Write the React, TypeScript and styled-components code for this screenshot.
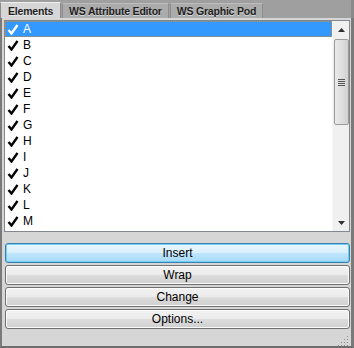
import React from "react";
import styled, { createGlobalStyle } from "styled-components";

const Global = createGlobalStyle`
    html, body {
        margin: 0;
        padding: 0;
        background: #a0a0a0;
    }
    * {
        box-sizing: border-box;
    }
`;

const Window = styled.div`
    width: 354px;
    height: 348px;
    display: flex;
    flex-direction: column;
    background: #a0a0a0;
    font-family: "Liberation Sans", Arial, sans-serif;
    overflow: hidden;
`;

const TabStrip = styled.div`
    height: 18px;
    display: flex;
    align-items: flex-end;
    background: #9f9f9f;
    border-right: 3px solid #8a8a8a;
`;

const Tab = styled.div<{ $active?: boolean }>`
    height: ${(p) => (p.$active ? "16px" : "15px")};
    padding: 0 ${(p) => (p.$active ? "7px" : "6px")};
    margin-right: 1px;
    display: flex;
    align-items: center;
    font-size: 10.5px;
    font-weight: bold;
    letter-spacing: -0.2px;
    color: #1e1e1e;
    text-shadow: 0 1px 0 rgba(255, 255, 255, 0.55);
    background: ${(p) => (p.$active ? "#d6d6d6" : "#ababab")};
    border: 1px solid ${(p) => (p.$active ? "#8c8c8c" : "#8e8e8e")};
    border-bottom: none;
    border-top-color: ${(p) => (p.$active ? "#f0f0f0" : "#bdbdbd")};
`;

const Panel = styled.div`
    flex: 1;
    display: flex;
    flex-direction: column;
    background: #d6d6d6;
    border-left: 2px solid #7a7a7a;
    border-right: 3px solid #7a7a7a;
    border-bottom: 2px solid #6e6e6e;
    padding: 2px 1px 0 2px;
    position: relative;
`;

const List = styled.div`
    height: 212px;
    display: flex;
    background: #ffffff;
    border: 1px solid #828790;
`;

const Items = styled.div`
    flex: 1;
`;

const Row = styled.div<{ $selected?: boolean }>`
    height: 16px;
    display: flex;
    align-items: center;
    gap: 4px;
    padding-left: 2px;
    font-size: 12px;
    color: ${(p) => (p.$selected ? "#ffffff" : "#000000")};
    background: ${(p) => (p.$selected ? "#3399ff" : "transparent")};
    outline: ${(p) => (p.$selected ? "1px dotted #d08a2a" : "none")};
    outline-offset: -1px;
`;

const ScrollBar = styled.div`
    width: 17px;
    display: flex;
    flex-direction: column;
    align-items: center;
    background: #f0f0f0;
    border-left: 1px solid #f6f6f6;
`;

const Arrow = styled.div`
    height: 17px;
    width: 100%;
    display: flex;
    align-items: center;
    justify-content: center;
`;

const Thumb = styled.div`
    width: 15px;
    height: 86px;
    margin-top: 1px;
    border: 1px solid #9a9a9a;
    border-radius: 2px;
    background: linear-gradient(to right, #eaeaea, #dcdcdc 60%, #d0d0d0);
    display: flex;
    align-items: center;
    justify-content: center;
`;

const Track = styled.div`
    flex: 1;
`;

const Buttons = styled.div`
    margin-top: 11px;
    display: flex;
    flex-direction: column;
    gap: 2px;
    padding: 0 0 0 1px;
`;

const Button = styled.div<{ $focused?: boolean }>`
    height: 20px;
    display: flex;
    align-items: center;
    justify-content: center;
    font-size: 12px;
    color: #000;
    border-radius: 3px;
    border: 1px solid ${(p) => (p.$focused ? "#3c7fb1" : "#707070")};
    background: ${(p) =>
        p.$focused
            ? "linear-gradient(to bottom, #eaf6fd 0%, #d9f0fc 50%, #bee6fd 51%, #a7d9f5 100%)"
            : "linear-gradient(to bottom, #f2f2f2 0%, #ebebeb 50%, #dddddd 51%, #cfcfcf 100%)"};
    box-shadow: ${(p) =>
        p.$focused ? "inset 0 0 0 1px #6fd0f6" : "inset 0 0 0 1px #fbfbfb"};
`;

const Grip = styled.div`
    position: absolute;
    right: 1px;
    bottom: 1px;
    width: 12px;
    height: 12px;
`;

const Check = () => (
    <svg width="12" height="11" viewBox="0 0 12 11">
        <path d="M1.5 6 L4.5 9.5 L10.5 1" fill="none" stroke="currentColor" strokeWidth="2.4" />
    </svg>
);

const letters = "ABCDEFGHIJKLM".split("");

export default function App() {
    return (
        <Window>
            <Global />
            <TabStrip>
                <Tab $active>Elements</Tab>
                <Tab>WS Attribute Editor</Tab>
                <Tab>WS Graphic Pod</Tab>
            </TabStrip>
            <Panel>
                <List>
                    <Items>
                        {letters.map((l, i) => (
                            <Row key={l} $selected={i === 0}>
                                <Check />
                                {l}
                            </Row>
                        ))}
                    </Items>
                    <ScrollBar>
                        <Arrow>
                            <svg width="7" height="4" viewBox="0 0 7 4">
                                <path d="M0 4 L3.5 0 L7 4 Z" fill="#303030" />
                            </svg>
                        </Arrow>
                        <Thumb>
                            <svg width="7" height="7" viewBox="0 0 7 7">
                                <path d="M0 0.5 H7 M0 2.5 H7 M0 4.5 H7 M0 6.5 H7" stroke="#555" strokeWidth="1" />
                            </svg>
                        </Thumb>
                        <Track />
                        <Arrow>
                            <svg width="7" height="4" viewBox="0 0 7 4">
                                <path d="M0 0 L7 0 L3.5 4 Z" fill="#303030" />
                            </svg>
                        </Arrow>
                    </ScrollBar>
                </List>
                <Buttons>
                    <Button $focused>Insert</Button>
                    <Button>Wrap</Button>
                    <Button>Change</Button>
                    <Button>Options...</Button>
                </Buttons>
                <Grip>
                    <svg width="12" height="12" viewBox="0 0 12 12">
                        {[
                            [10, 2], [10, 5], [7, 5], [10, 8], [7, 8], [4, 8], [10, 11], [7, 11], [4, 11], [1, 11],
                        ].map(([x, y]) => (
                            <rect key={`${x}-${y}`} x={x - 1} y={y - 1} width="1" height="1" fill="#8a8a8a" />
                        ))}
                    </svg>
                </Grip>
            </Panel>
        </Window>
    );
}
